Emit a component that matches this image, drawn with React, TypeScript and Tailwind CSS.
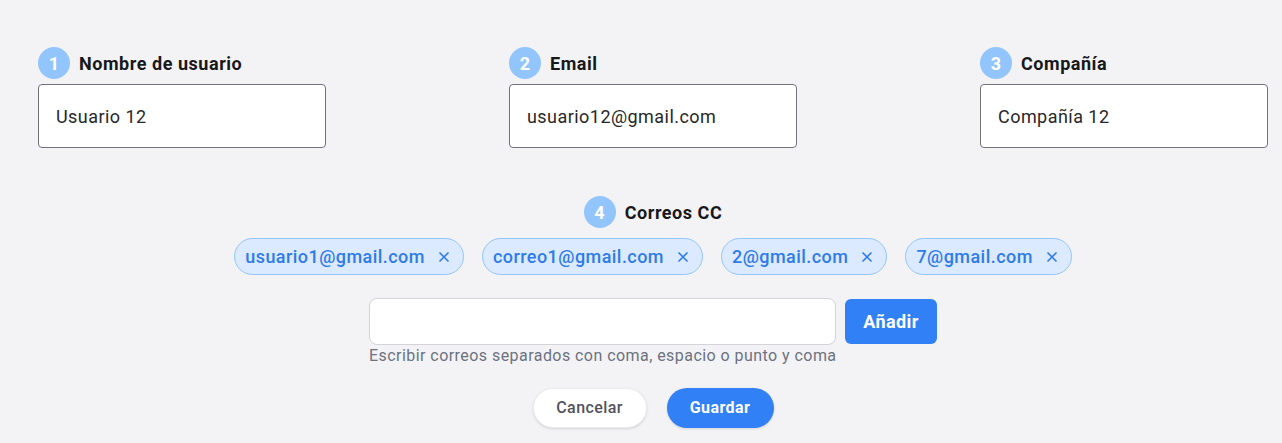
import { useState } from "react";

type Field = {
  n: number;
  label: string;
  value: string;
};

const fields: Field[] = [
  { n: 1, label: "Nombre de usuario", value: "Usuario 12" },
  { n: 2, label: "Email", value: "usuario12@gmail.com" },
  { n: 3, label: "Compañía", value: "Compañía 12" },
];

function Step({ n, label }: { n: number; label: string }) {
  return (
    <div className="flex items-center gap-[9px] h-8">
      <span className="w-8 h-8 rounded-full bg-[#93c5fd] text-white text-[18px] font-bold flex items-center justify-center">
        {n}
      </span>
      <span className="text-[18px] font-bold tracking-[0.03em] text-[#18181b]">{label}</span>
    </div>
  );
}

export default function App() {
  const [emails, setEmails] = useState([
    "usuario1@gmail.com",
    "correo1@gmail.com",
    "2@gmail.com",
    "7@gmail.com",
  ]);
  const [draft, setDraft] = useState("");

  function addEmails() {
    const parts = draft.split(/[,;\s]+/).filter(Boolean);
    if (parts.length) setEmails([...emails, ...parts]);
    setDraft("");
  }

  return (
    <div
      className="min-h-screen bg-[#f3f3f6] pl-[38px] pr-[14px] pt-[47px] tracking-[0.025em]"
      style={{ fontFamily: "Roboto, 'Liberation Sans', sans-serif" }}
    >
      {/* top fields */}
      <div className="flex justify-between">
        {fields.map((f) => (
          <div key={f.n} className="w-[288px]">
            <Step n={f.n} label={f.label} />
            <input
              defaultValue={f.value}
              className="mt-[5px] w-full h-16 px-[17px] bg-white border border-[#71717a] rounded-[4px] text-[18px] tracking-[0.025em] text-[#27272a] outline-none"
            />
          </div>
        ))}
      </div>

      {/* correos cc */}
      <div className="flex flex-col items-center mt-[48px]">
        <Step n={4} label="Correos CC" />
        <div className="flex gap-[18px] mt-[10px]">
          {emails.map((e, i) => (
            <span
              key={i}
              className="h-[37px] flex items-center gap-[13px] pl-[10px] pr-[13px] rounded-full bg-[#dbeafe] border border-[#93c5fd] text-[#2f7bea] text-[18px] font-medium tracking-[0.025em]"
            >
              {e}
              <button onClick={() => setEmails(emails.filter((_, j) => j !== i))} className="text-[#2f7bea]">
                <svg width="12" height="12" viewBox="0 0 12 12" fill="none" stroke="currentColor" strokeWidth="1.6">
                  <path d="M1.5 1.5l9 9M10.5 1.5l-9 9" />
                </svg>
              </button>
            </span>
          ))}
        </div>

        <div className="flex items-center gap-[9px] mt-[23px]">
          <input
            value={draft}
            onChange={(e) => setDraft(e.target.value)}
            className="w-[467px] h-[47px] px-3 bg-white border border-[#d4d4d8] rounded-[8px] outline-none"
          />
          <button
            onClick={addEmails}
            className="w-[92px] h-[45px] rounded-[6px] bg-[#3180f6] text-white text-[18px] font-bold"
          >
            Añadir
          </button>
        </div>
        <p className="w-[568px] text-[16px] text-[#6b7280] leading-[20px] mt-[1px] tracking-[0.028em]">
          Escribir correos separados con coma, espacio o punto y coma
        </p>

        <div className="flex gap-[20px] mt-[22px]">
          <button className="w-[114px] h-10 rounded-full bg-white border border-[#ececf0] shadow-sm text-[#52525b] text-[16px] font-medium">
            Cancelar
          </button>
          <button className="w-[107px] h-10 rounded-full bg-[#3180f6] text-white text-[16px] font-bold shadow-sm">
            Guardar
          </button>
        </div>
      </div>
    </div>
  );
}
